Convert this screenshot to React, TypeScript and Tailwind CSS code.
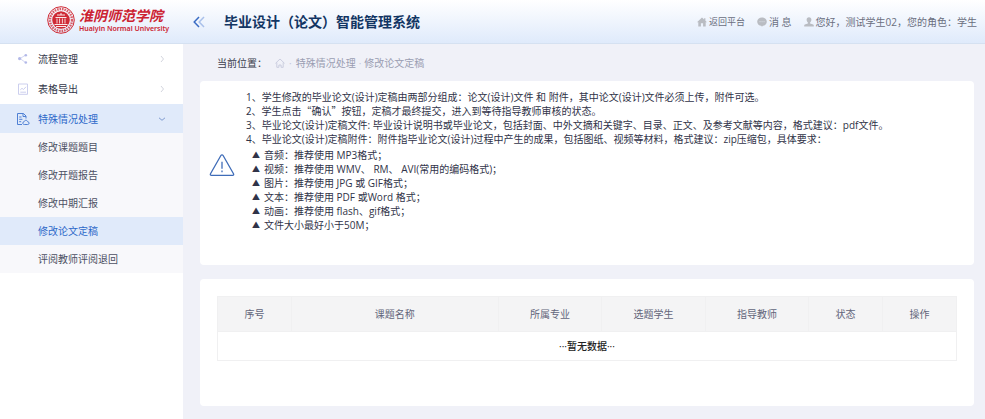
import React, { FC, ReactNode } from "react";

const columns = [
  { label: "序号", width: "w-[10%]" },
  { label: "课题名称", width: "w-[28%]" },
  { label: "所属专业", width: "w-[14%]" },
  { label: "选题学生", width: "w-[14%]" },
  { label: "指导教师", width: "w-[14%]" },
  { label: "状态", width: "w-[10%]" },
  { label: "操作", width: "w-[10%]" },
];

const subItems = [
  "修改课题题目",
  "修改开题报告",
  "修改中期汇报",
  "修改论文定稿",
  "评阅教师评阅退回",
];

const formats = [
  "音频：推荐使用 MP3格式；",
  "视频：推荐使用 WMV、 RM、 AVI(常用的编码格式)；",
  "图片：推荐使用 JPG 或 GIF格式；",
  "文本：推荐使用 PDF 或Word 格式；",
  "动画：推荐使用 flash、gif格式；",
  "文件大小最好小于50M；",
];

const Seal = () => (
  <svg viewBox="0 0 28 28" className="size-7 shrink-0" fill="none" stroke="#cf2a35">
    <circle cx="14" cy="14" r="13.3" strokeWidth="1" />
    <circle cx="14" cy="14" r="11" strokeWidth="2.4" strokeDasharray="1.6 0.9" opacity="0.75" />
    <circle cx="14" cy="14" r="8.8" fill="#cf2a35" stroke="none" />
    <path d="M8.5 11.5h11M10 9h8M14 7v2M7.5 18.5h13M9 20.5h10" stroke="#fff" strokeWidth="0.9" />
    <path d="M10 12.5v5M12.6 12.5v5M15.4 12.5v5M18 12.5v5" stroke="#fff" strokeWidth="0.8" />
  </svg>
);

const CollapseIcon = () => (
  <svg viewBox="0 0 12 12" className="size-3" fill="none" strokeWidth="1.5">
    <path d="M6 1 1.2 6 6 11" stroke="#3a6cc4" />
    <path d="M11 1 6.2 6 11 11" stroke="#a9c0ea" />
  </svg>
);

const HomeIcon = () => (
  <svg viewBox="0 0 10 10" className="size-[10px]" fill="#b9bcc2">
    <path d="M5 .5 0 5.2h1.3V9.5h2.6V6.3h2.2v3.2h2.6V5.2H10L8.4 3.7V1.3H7.1v1.2z" />
  </svg>
);

const MessageIcon = () => (
  <svg viewBox="0 0 10 10" className="size-[10px]" fill="#b9bcc2">
    <path d="M5 .6C2.2.6.2 2.4.2 4.7S2.2 8.7 4.2 8.8L5 9.8l.8-1C8 8.6 9.8 7 9.8 4.7S7.8.6 5 .6z" />
    <path d="M2.6 4.7h.9M4.6 4.7h.9M6.6 4.7h.9" stroke="#e3e8f0" strokeWidth=".9" />
  </svg>
);

const UserIcon = () => (
  <svg viewBox="0 0 10 10" className="size-[10px]" fill="#b9bcc2">
    <path d="M5 .3c-1.5 0-2.4 1-2.4 2.5 0 1.2.6 2.2 1.3 2.7v.9L.8 7.500C.4 7.700.2 8 .2 8.500v1h9.600v-1c0-.5-.2-.8-.6-1L6.100 6.400v-.9c.7-.5 1.300-1.500 1.300-2.700C7.400 1.300 6.500.3 5 .3z" />
  </svg>
);

const ShareIcon = () => (
  <svg viewBox="0 0 12 12" className="size-3" fill="#b3b9e8" stroke="#c9cdf0">
    <path d="M8.5 2.2 3 5.5l5.5 4" fill="none" strokeWidth=".8" />
    <circle cx="2.6" cy="5.6" r="1.6" stroke="none" />
    <circle cx="8.8" cy="2.2" r="1.3" stroke="none" />
    <circle cx="8.8" cy="9.5" r="1.3" stroke="none" />
  </svg>
);

const ReportIcon = () => (
  <svg viewBox="0 0 12 12" className="size-3" fill="none" stroke="#c6caec" strokeWidth=".9">
    <path d="M1.5 1h9v10.3h-9z" />
    <path d="M3.3 6.8 5 5.3l1.5 1.2L9 3.8M3.3 9.2H9" />
  </svg>
);

const DocIcon = () => (
  <svg viewBox="0 0 14 14" className="size-[14px]" fill="none" stroke="#4f80d4" strokeWidth="1">
    <path d="M6 12.5H1.5v-11h6L10 4v2.5M7 1.5v3h3M3.2 5h2.3M3.2 7.3h3.2M3.2 9.7h2" />
    <path d="M8.3 12.5c-2 0-2-2.6-.2-2.7.3-2 3.3-2 3.6 0 1.900.1 1.900 2.700 0 2.700z" />
  </svg>
);

const WarningIcon = () => (
  <svg viewBox="0 0 26 24" className="mt-2 h-6 w-[26px] shrink-0" fill="none" stroke="#3f6cb8" strokeWidth="1.3">
    <path d="M11.9 2.5 1.500 20.700c-.5.900 0 1.600.9 1.600h21.200c.9 0 1.400-.7.9-1.600L14.100 2.500c-.5-.9-1.700-.9-2.200 0z" />
    <path d="M13 8.8v7" />
    <path d="M13 17.6v1.6" />
  </svg>
);

const Chevron = ({ open }: any) => (
  <svg viewBox="0 0 8 8" className="mr-[17px] ml-auto size-2" fill="none" stroke={open ? "#7f9bd0" : "#d3d5de"}>
    <path d={open ? "M1 2.8 4 5.3 7 2.8" : "M3 1 5.5 4 3 7"} />
  </svg>
);

type MenuProps = {
  icon: ReactNode;
  label: string;
  open?: boolean;
}

const MenuItem: FC<MenuProps> = ({ icon, label, open }) => (
  <a
    href="#"
    className={
      open
        ? "flex h-[29px] items-center bg-[#e0eafa] text-[#2d68c9]"
        : "flex h-[30px] items-center text-[#33374a]"
    }
  >
    <span className="flex w-[38px] justify-center pl-2">{icon}</span>
    {label}
    <Chevron open={open} />
  </a>
);

const Header = () => (
  <header className="flex h-11 items-center border-b border-[#d5e1f1] bg-linear-to-b from-white to-[#dfeafb]">
    <div className="flex w-[183px] shrink-0 items-center gap-1 pb-1 pl-[47px]">
      <Seal />
      <div className="whitespace-nowrap text-[#cc2231]">
        <div className="text-[14px] leading-[18px] font-bold italic">淮阴师范学院</div>
        <div className="font-['Noto_Sans',sans-serif] text-[7px] leading-[8px] font-semibold">Huaiyin Normal University</div>
      </div>
    </div>
    <button type="button" aria-label="收起菜单" className="ml-[10px]">
      <CollapseIcon />
    </button>
    <h1 className="ml-[19px] text-[14px] font-bold whitespace-nowrap text-[#123563]">毕业设计（论文）智能管理系统</h1>
    <nav className="mr-2 ml-auto flex items-center gap-3 whitespace-nowrap text-[#6a6e7e]">
      <a href="#" className="flex items-center gap-[2px] text-[9px]"><HomeIcon />返回平台</a>
      <a href="#" className="flex items-center gap-[2px]"><MessageIcon />消 息</a>
      <span className="flex items-center gap-[2px]"><UserIcon />您好，测试学生02，您的角色：学生</span>
    </nav>
  </header>
);

const Sidebar = () => (
  <aside className="w-[183px] shrink-0 bg-white">
    <MenuItem icon={<ShareIcon />} label="流程管理" />
    <MenuItem icon={<ReportIcon />} label="表格导出" />
    <MenuItem icon={<DocIcon />} label="特殊情况处理" open />
    <ul className="bg-[#f8f8fb]">
      {subItems.map((item, i) => (
        <li key={i}>
          <a
            href="#"
            className={
              item === "修改论文定稿"
                ? "flex h-7 items-center bg-[#e0eafa] pl-[38px] text-[#2d68c9]"
                : "flex h-7 items-center pl-[38px] text-[#4c5063]"
            }
          >
            {item}
          </a>
        </li>
      ))}
    </ul>
  </aside>
);

const Notice = () => (
  <section className="flex min-h-[184px] items-start rounded-sm bg-white px-[9px] py-[9px]">
    <div className="flex items-center gap-[11px] leading-[14px] text-[#303348]">
      <WarningIcon />
      <div>
        <p>1、学生修改的毕业论文(设计)定稿由两部分组成：论文(设计)文件 和 附件，其中论文(设计)文件必须上传，附件可选。</p>
        <p className="font-['Noto_Sans_CJK_SC',sans-serif]">2、学生点击“确认”按钮，定稿才最终提交，进入到等待指导教师审核的状态。</p>
        <p>3、毕业论文(设计)定稿文件: 毕业设计说明书或毕业论文，包括封面、中外文摘和关键字、目录、正文、及参考文献等内容，格式建议：pdf文件。</p>
        <p>4、毕业论文(设计)定稿附件：附件指毕业论文(设计)过程中产生的成果，包括图纸、视频等材料，格式建议：zip压缩包，具体要求：</p>
        <ul className="mt-[2px] pl-[6px]">
          {formats.map((text, i) => (
            <li key={i} className="flex gap-1">
              <span className="text-[8px]">▲</span>
              {text}
            </li>
          ))}
        </ul>
      </div>
    </div>
  </section>
);

const ThesisTable = () => (
  <section className="mt-[14px] min-h-[127px] rounded-sm bg-white px-[17px] pt-[17px]">
    <table className="w-full table-fixed border-collapse text-center">
      <thead>
        <tr className="h-[35px] bg-[#f4f4f5] text-[#62657a]">
          {columns.map((column, i) => (
            <th key={i} className={`${column.width} border border-[#f0f0f1] font-normal`}>
              {column.label}
            </th>
          ))}
        </tr>
      </thead>
      <tbody>
        <tr className="h-[29px]">
          <td colSpan={columns.length} className="border border-[#f0f0f1] font-medium text-[#222222]">
            ···暂无数据···
          </td>
        </tr>
      </tbody>
    </table>
  </section>
);

export default function App() {
  return (
    <div className="flex min-h-screen flex-col bg-[#f0f1f8] font-['Open_Sans','Noto_Sans_CJK_SC',sans-serif] text-[10px] leading-[14px]">
      <Header />
      <div className="flex flex-1">
        <Sidebar />
        <main className="min-w-0 flex-1 pr-[11px] pb-3 pl-[17px]">
          <nav className="flex h-[37px] items-center pl-[17px] text-[#9a9db2]">
            <span className="text-[#3a3d4c]">当前位置：</span>
            <a href="#" aria-label="首页" className="ml-[8px]">
              <svg viewBox="0 0 10 10" className="size-[10px]" fill="none" stroke="#c6c9dc" strokeWidth=".9">
                <path d="M.5 5.3 5 1l4.5 4.3M1.8 4.5v4.8h2.1V7h2.2v2.3h2.1V4.500" />
              </svg>
            </a>
            <span className="px-1 text-[#c6c9dc]">·</span>
            <a href="#">特殊情况处理</a>
            <span className="px-[3px] text-[#c6c9dc]">·</span>
            <span>修改论文定稿</span>
          </nav>
          <Notice />
          <ThesisTable />
        </main>
      </div>
    </div>
  );
}
